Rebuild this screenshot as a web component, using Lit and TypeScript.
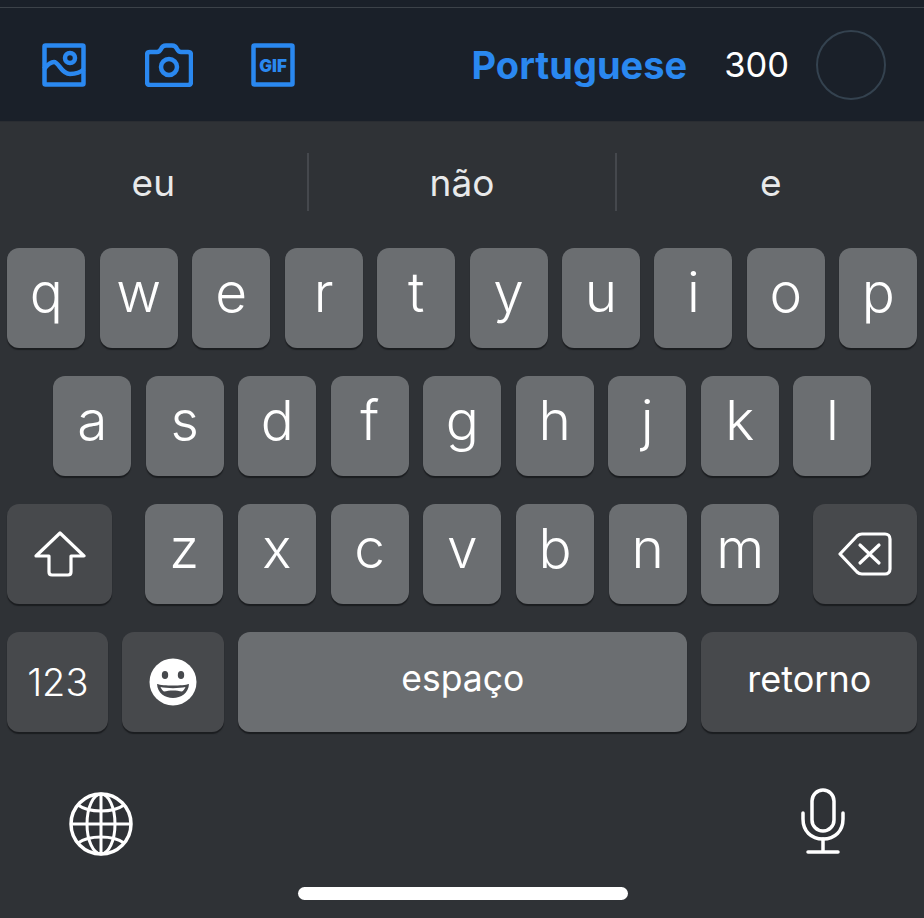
import { LitElement, html, css, svg } from 'lit';
import { customElement } from 'lit/decorators.js';

const ROW1 = ['q', 'w', 'e', 'r', 't', 'y', 'u', 'i', 'o', 'p'];
const ROW2 = ['a', 's', 'd', 'f', 'g', 'h', 'j', 'k', 'l'];
const ROW3 = ['z', 'x', 'c', 'v', 'b', 'n', 'm'];
const SUGGESTIONS = ['eu', 'não', 'e'];

const imageIcon = svg`<svg class="ic" width="44" height="44" viewBox="0 0 44 44" fill="none" stroke="#2a88f0" stroke-width="4.5">
  <rect x="2.500" y="2.500" width="39" height="39" rx="1" stroke-linejoin="round"/>
  <circle cx="28" cy="15" r="5"/>
  <path d="M2 26 C6 21 9 19 12 19 C17 19 19 31 28 31 C33 31 38 30 42 26"/>
</svg>`;

const cameraIcon = svg`<svg class="ic" width="48" height="44" viewBox="0 0 48 44" fill="none" stroke="#2a88f0" stroke-width="4.500" stroke-linejoin="round">
  <path d="M5 9 H12 C14 9 15 8 16 6 C17 3.500 18 2.500 21 2.500 H27 C30 2.500 31 3.500 32 6 C33 8 34 9 36 9 H43 C45 9 46 10 46 12 V39 C46 41 45 42 43 42 H5 C3 42 2 41 2 39 V12 C2 10 3 9 5 9 Z"/>
  <circle cx="24" cy="24" r="8"/>
</svg>`;

const gifIcon = svg`<svg class="ic" width="44" height="44" viewBox="0 0 44 44" fill="none">
  <rect x="2.500" y="2.500" width="39" height="39" rx="1" stroke="#2a88f0" stroke-width="4.500" stroke-linejoin="round"/>
  <text x="22" y="28.500" text-anchor="middle" fill="#2a88f0" font-family="Inter, sans-serif" font-weight="900" font-size="17">GIF</text>
</svg>`;

const shiftIcon = svg`<svg width="52" height="46" viewBox="0 0 52 46" fill="none" stroke="#fff" stroke-width="3.200" stroke-linejoin="round">
  <path d="M26 2 L50 25 H37 V41 C37 43 36 44 34 44 H18 C16 44 15 43 15 41 V25 H2 Z"/>
</svg>`;

const deleteIcon = svg`<svg width="54" height="44" viewBox="0 0 54 44" fill="none" stroke="#fff" stroke-width="3.200" stroke-linejoin="round" stroke-linecap="round">
  <path d="M2 22 L19 4 C20.500 2.500 21.500 2 24 2 H47 C50 2 52 4 52 7 V37 C52 40 50 42 47 42 H24 C21.500 42 20.500 41.500 19 40 Z"/>
  <path d="M22 13 L41 31 M41 13 L22 31"/>
</svg>`;

const emojiIcon = svg`<svg width="48" height="48" viewBox="0 0 48 48">
  <circle cx="24" cy="24" r="23.500" fill="#fff"/>
  <ellipse cx="16" cy="17" rx="3.200" ry="4" fill="#47494d"/>
  <ellipse cx="32" cy="17" rx="3.200" ry="4" fill="#47494d"/>
  <path d="M8 26 C14 28 34 28 40 26 C39.500 35 32 40 24 40 C16 40 8.500 35 8 26 Z" fill="#47494d"/>
  <path d="M11.500 29 C17 30.500 31 30.500 36.500 29 C35.500 31.500 34.500 32.500 33 33.500 C28 32 20 32 15 33.500 C13.500 32.500 12.500 31.500 11.500 29 Z" fill="#fff"/>
</svg>`;

const globeIcon = svg`<svg class="globe" width="64" height="64" viewBox="0 0 64 64" fill="none" stroke="#fff" stroke-width="3">
  <circle cx="32" cy="32" r="30" stroke-width="3.500"/>
  <ellipse cx="32" cy="32" rx="14" ry="30"/>
  <path d="M32 2 V62 M2 32 H62"/>
  <path d="M9 13 C20 21 44 21 55 13 M9 51 C20 43 44 43 55 51"/>
</svg>`;

const micIcon = svg`<svg width="44" height="66" viewBox="0 0 44 66" fill="none" stroke="#fff" stroke-width="3.500" stroke-linecap="round">
  <rect x="11" y="2" width="22" height="41" rx="11"/>
  <path d="M2 25 V31 C2 43 10 51 22 51 C34 51 42 43 42 31 V25"/>
  <path d="M22 51 V64 M7 64 H37"/>
</svg>`;

@customElement('app-root')
export class AppRoot extends LitElement {
  static styles = css`
    :host {
      display: block;
      width: 924px;
      height: 918px;
      overflow: hidden;
      background: #2f3236;
      font-family: Inter, 'Liberation Sans', sans-serif;
    }

    .strip {
      height: 7px;
      background: #1a2029;
      border-bottom: 1px solid #3c4249;
    }

    .toolbar {
      height: 114px;
      box-sizing: border-box;
      padding: 0 38px 0 42px;
      display: flex;
      align-items: center;
      background: #1a2029;
      border-bottom: 1px solid #2a2d32;
    }

    .tools {
      display: flex;
      align-items: center;
      gap: 58.5px;
    }

    .ic {
      display: block;
    }

    .lang {
      margin-left: auto;
      font-size: 38px;
      font-weight: 700;
      color: #2a88f0;
    }

    .count {
      margin-left: 37px;
      font-size: 34.5px;
      color: #fff;
    }

    .ring {
      margin-left: 27px;
      width: 70px;
      height: 70px;
      box-sizing: border-box;
      border: 2px solid #34424f;
      border-radius: 50%;
    }

    .suggestions {
      height: 126px;
      box-sizing: border-box;
      padding-bottom: 6px;
      display: flex;
      align-items: center;
    }

    .suggestion {
      flex: 1;
      height: 58px;
      display: flex;
      align-items: center;
      justify-content: center;
      font-size: 37px;
      color: #e8e9ea;
    }

    .suggestion + .suggestion {
      border-left: 2px solid #45484d;
    }

    .rows {
      display: flex;
      flex-direction: column;
      gap: 28px;
      padding: 0 6.7px 0 7.3px;
    }

    .row {
      display: flex;
      gap: 14.5px;
      height: 100px;
    }

    .row.home {
      padding: 0 46px;
    }

    .row.caps {
      justify-content: space-between;
    }

    .letters {
      display: flex;
      gap: 14.7px;
      width: 634px;
    }

    .row.bottom {
      gap: 14px;
    }

    .key {
      flex: 1;
      box-sizing: border-box;
      display: flex;
      align-items: center;
      justify-content: center;
      border-radius: 12px;
      background: #6b6e71;
      box-shadow: 0 2px 1px #1b1d20;
      color: #fff;
      font-size: 55px;
      font-weight: 300;
      padding-bottom: 12px;
    }

    .key.fn {
      flex: none;
      background: #47494c;
      padding-bottom: 0;
    }

    .key.shift,
    .key.del {
      width: 104.5px;
    }

    .key.num {
      width: 101px;
      font-size: 38px;
    }

    .key.emoji {
      width: 102px;
    }

    .key.space {
      flex: none;
      width: 449px;
      font-size: 35.5px;
      font-weight: 400;
      padding-bottom: 8px;
    }

    .key.enter {
      width: 216px;
      font-size: 36px;
      font-weight: 400;
      padding-bottom: 6px;
    }

    .footer {
      height: 155px;
      box-sizing: border-box;
      padding: 56px 79px 0 69px;
      display: flex;
      justify-content: space-between;
      align-items: flex-start;
    }

    .globe {
      margin-top: 4px;
    }

    .homebar {
      width: 330px;
      height: 13px;
      margin-left: 298px;
      border-radius: 7px;
      background: #fff;
    }
  `;

  private letter(k: string) {
    return html`<div class="key">${k}</div>`;
  }

  render() {
    return html`
      <div class="strip"></div>
      <div class="toolbar">
        <div class="tools">${imageIcon}${cameraIcon}${gifIcon}</div>
        <span class="lang">Portuguese</span>
        <span class="count">300</span>
        <div class="ring"></div>
      </div>
      <div class="suggestions">
        ${SUGGESTIONS.map((s) => html`<div class="suggestion">${s}</div>`)}
      </div>
      <div class="rows">
        <div class="row">${ROW1.map((k) => this.letter(k))}</div>
        <div class="row home">${ROW2.map((k) => this.letter(k))}</div>
        <div class="row caps">
          <div class="key fn shift">${shiftIcon}</div>
          <div class="letters">${ROW3.map((k) => this.letter(k))}</div>
          <div class="key fn del">${deleteIcon}</div>
        </div>
        <div class="row bottom">
          <div class="key fn num">123</div>
          <div class="key fn emoji">${emojiIcon}</div>
          <div class="key space">espaço</div>
          <div class="key fn enter">retorno</div>
        </div>
      </div>
      <div class="footer">${globeIcon}${micIcon}</div>
      <div class="homebar"></div>
    `;
  }
}
